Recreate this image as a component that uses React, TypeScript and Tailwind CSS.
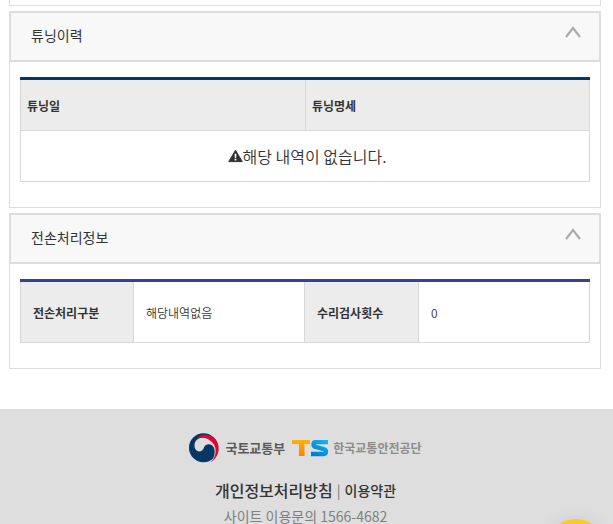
import { useState, type ReactNode } from "react";

function Chevron({ open }: { open: boolean }) {
  return (
    <svg
      width="16"
      height="14"
      viewBox="0 0 16 14"
      fill="none"
      stroke="#ababab"
      strokeWidth="2.2"
      aria-hidden="true"
      className={open ? "" : "rotate-180"}
    >
      <path d="M1 12 L8 3 L15 12" />
    </svg>
  );
}

function Panel({ title, children }: { title: string; children: ReactNode }) {
  const [open, setOpen] = useState(true);
  return (
    <section>
      <h2>
        <button
          type="button"
          aria-expanded={open}
          onClick={() => setOpen(!open)}
          className="flex h-[51px] w-full items-start justify-between border-2 border-[#dddddd] bg-[#f8f8f8] pt-3 pr-[18px] pl-5 text-left text-sm leading-5 text-[#333333]"
        >
          <span>{title}</span>
          <Chevron open={open} />
        </button>
      </h2>
      {open && (
        <div className="border border-t-0 border-[#dddddd] px-2.5 pt-[15px] pb-[25px]">{children}</div>
      )}
    </section>
  );
}

function WarningIcon() {
  return (
    <svg width="15" height="14" viewBox="0 0 16 14" aria-hidden="true">
      <path d="M8 0.8 L15.3 13 H0.7 Z" fill="#333333" stroke="#333333" strokeLinejoin="round" />
      <path d="M7 4.6 H9 L8.7 9 H7.3 Z M7.1 10 H8.9 V11.7 H7.1 Z" fill="#ffffff" />
    </svg>
  );
}

function TaegeukMark() {
  return (
    <svg width="30" height="30" viewBox="0 0 30 30" aria-hidden="true">
      <circle cx="14.5" cy="14.8" r="14.5" fill="#043764" />
      <path
        d="M5.500 11.500 C6 6 13 2.500 20 6 L31 14 V30 H21 C25 26 27 19 24.800 14.500 C22.500 10 16.500 10.500 15 14.500 C13.800 18 10.500 19.300 8 17.800 C6 16.500 5.300 14 5.500 11.500 Z"
        fill="#dedede"
      />
      <path
        d="M7 5.200 C13 0 21.500 0.800 26.200 6 C31.800 12.500 31 23.500 21.500 29.500 C27.500 23.500 28.300 15.500 23.800 10 C19.500 4.800 13 3.500 7 5.200 Z"
        fill="#e4032e"
      />
    </svg>
  );
}

function TsMark() {
  return (
    <svg width="37" height="17" viewBox="0 0 37 17" aria-hidden="true">
      <defs>
        <linearGradient id="ts-orange" x1="0" y1="0" x2="0" y2="1">
          <stop offset="0" stopColor="#ffb400" />
          <stop offset="1" stopColor="#f98200" />
        </linearGradient>
        <linearGradient id="ts-blue" x1="0" y1="1" x2="1" y2="0">
          <stop offset="0" stopColor="#0079cf" />
          <stop offset="1" stopColor="#12b5f0" />
        </linearGradient>
      </defs>
      <path d="M0 0 H18 V4 H12.500 V16 H7 V4 H0 Z" fill="url(#ts-orange)" />
      <path
        d="M36 2 H24.500 Q21.500 2 21.500 4.500 Q21.500 6.500 24.500 7.200 L31 8.800 Q34 9.500 34 11.500 Q34 14 31 14 H19"
        fill="none"
        stroke="url(#ts-blue)"
        strokeWidth="4.4"
      />
    </svg>
  );
}

const th = "border border-t-0 border-[#d8d8d8] bg-[#ececec] pt-0.5 text-left text-xs font-bold text-[#333333]";
const td = "border border-t-0 border-[#d8d8d8] pt-0.5 text-xs font-[350] text-[#333333]";

export default function App() {
  return (
    <div className="flex min-h-screen flex-col bg-white font-['Noto_Sans_CJK_KR',sans-serif]">
      <main className="flex flex-col gap-[5px] pr-3 pb-10 pl-[9px]">
        <div className="h-1.5 border border-t-0 border-[#dddddd]" />

        <Panel title="튜닝이력">
          <table className="w-full table-fixed border-separate border-spacing-0 border-t-3 border-[#043764]">
            <thead>
              <tr className="h-[51px]">
                <th scope="col" className={`${th} border-r-0 px-1.5`}>튜닝일</th>
                <th scope="col" className={`${th} px-1.5`}>튜닝명세</th>
              </tr>
            </thead>
            <tbody>
              <tr className="h-[51px]">
                <td colSpan={2} className="border border-t-0 border-[#d8d8d8] pl-1 text-base font-[350] text-[#333333]">
                  <div className="flex items-center justify-center">
                    <WarningIcon />
                    <span>해당 내역이 없습니다.</span>
                  </div>
                </td>
              </tr>
            </tbody>
          </table>
        </Panel>

        <Panel title="전손처리정보">
          <table className="w-full table-fixed border-separate border-spacing-0 border-t-3 border-[#334199]">
            <colgroup>
              <col className="w-1/5" />
              <col className="w-3/10" />
              <col className="w-1/5" />
              <col className="w-3/10" />
            </colgroup>
            <tbody>
              <tr className="h-[61px]">
                <th scope="row" className={`${th} px-3`}>전손처리구분</th>
                <td className={`${td} border-l-0 px-3`}>해당내역없음</td>
                <th scope="row" className={`${th} border-l-0 px-3`}>수리검사횟수</th>
                <td className={`${td} border-l-0 px-3`}>0</td>
              </tr>
            </tbody>
          </table>
        </Panel>
      </main>

      <footer className="flex flex-1 flex-col items-center bg-[#dedede] pt-6 pr-0.5 text-center">
        <div className="flex h-[30px] items-center">
          <TaegeukMark />
          <span className="ml-1.5 text-[13px] font-bold text-[#5a5a5a]">국토교통부</span>
          <span className="ml-[7px]">
            <TsMark />
          </span>
          <span className="ml-1 text-xs font-bold text-[#8c8c8c]">한국교통안전공단</span>
        </div>
        <div className="mt-[15px] flex h-6 items-center gap-1 text-sm font-medium text-[#333333]">
          <a href="#privacy" className="text-base">개인정보처리방침</a>
          <span className="font-normal text-[#777777]">|</span>
          <a href="#terms">이용약관</a>
        </div>
        <p className="mt-1.5 text-sm leading-4 text-[#808080]">사이트 이용문의 1566-4682</p>
      </footer>

      <button
        type="button"
        aria-label="맨 위로"
        onClick={() => window.scrollTo({ top: 0 })}
        className="fixed right-[7px] -bottom-[55px] size-[60px] rounded-full bg-[#ffc82c] shadow-[0_0_16px_rgba(0,0,0,0.08)]"
      />
    </div>
  );
}
